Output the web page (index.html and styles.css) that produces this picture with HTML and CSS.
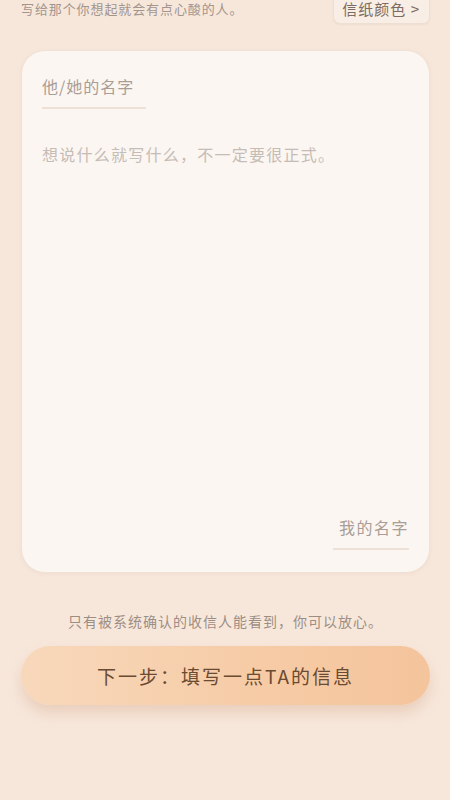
FILE: index.html
```html
<!DOCTYPE html>
<html lang="zh-CN">
<head>
  <meta charset="UTF-8" />
  <meta name="viewport" content="width=device-width, initial-scale=1.0"/>
  <title>写一封信</title>
  <link rel="stylesheet" href="styles.css">
</head>
<body>

  <div class="top">
    <div class="hint">写给那个你想起就会有点心酸的人。</div>
    <button class="paper-btn">信纸颜色 &gt;</button>
  </div>

  <div class="letter">
    <div class="to-name">他/她的名字</div>
    <div class="content">想说什么就写什么，不一定要很正式。</div>
    <div class="from-row">
      <div class="from-name">我的名字</div>
    </div>
  </div>

  <p class="privacy">只有被系统确认的收信人能看到，你可以放心。</p>

  <button class="next-btn">下一步：填写一点TA的信息</button>

</body>
</html>
```

FILE: styles.css
```css
body {
  margin: 0;
  padding: 0 20px 0 21px;
  background: #f7e7db;
  font-family: "Noto Sans CJK SC", "Noto Sans", sans-serif;
  color: #7a6a60;
  height: 800px;
  box-sizing: border-box;
  overflow: hidden;
}
.top {
  display: flex;
  justify-content: space-between;
  align-items: center;
  margin-top: -8px;
  height: 32px;
}
.hint {
  font-size: 13px;
  letter-spacing: 0.9px;
  color: #a2958d;
}
.paper-btn {
  font-family: inherit;
  font-size: 15px;
  color: #7c6c62;
  background: #f9eee5;
  border: 1px solid #eedfd3;
  border-radius: 7px;
  padding: 0 9px 0 8px;
  height: 32px;
  letter-spacing: 1px;
  box-shadow: 0 1px 2px rgba(180, 140, 110, 0.12);
}
.letter {
  margin-top: 26px;
  height: 523px;
  box-sizing: border-box;
  background: #fbf6f1;
  border: 1px solid #f1e2d7;
  border-radius: 24px;
  box-shadow: 0 1px 4px rgba(190, 150, 120, 0.12);
  padding: 23px 20px 22px 20px;
  display: flex;
  flex-direction: column;
}
.to-name {
  font-size: 16px;
  letter-spacing: 1px;
  color: #a99d96;
  width: 104px;
  padding-bottom: 9px;
  border-bottom: 2px solid #ece0d7;
}
.content {
  margin-top: 33px;
  font-size: 16px;
  letter-spacing: 1.25px;
  color: #c6bcb6;
  flex: 1;
}
.from-row {
  display: flex;
  justify-content: flex-end;
}
.from-name {
  font-size: 16px;
  letter-spacing: 1.5px;
  color: #a99d96;
  width: 76px;
  text-align: right;
  padding-bottom: 9px;
  border-bottom: 2px solid #ece0d7;
}
.privacy {
  margin: 38px 0 0;
  text-align: center;
  font-size: 14px;
  letter-spacing: 1px;
  color: #9d8e84;
}
.next-btn {
  display: block;
  width: 100%;
  margin-top: 15px;
  height: 59px;
  border: none;
  border-radius: 30px;
  background: linear-gradient(90deg, #f8d8bb, #f6cba5 60%, #f4c49c);
  box-shadow: 0 8px 14px rgba(210, 160, 130, 0.35);
  font-family: inherit;
  font-size: 19px;
  color: #6b4a32;
  letter-spacing: 2px;
}
```
